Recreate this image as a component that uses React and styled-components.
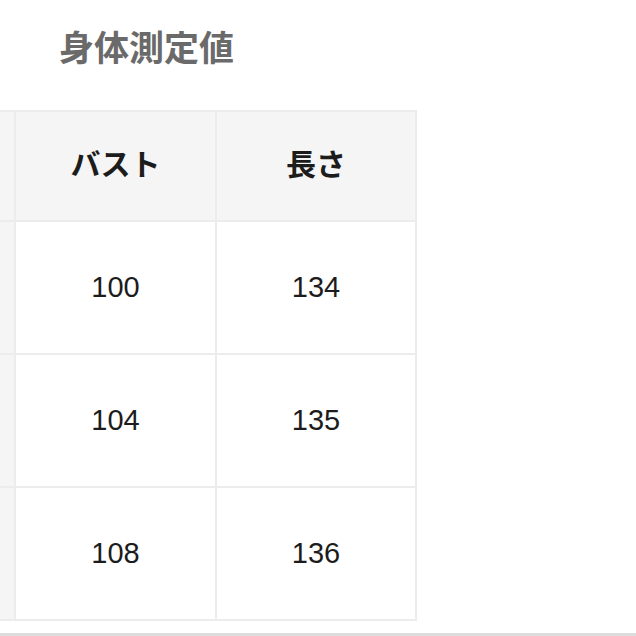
import React from 'react';
import styled, { createGlobalStyle } from 'styled-components';

const GlobalStyle = createGlobalStyle`
  html, body {
    margin: 0;
    padding: 0;
    background: #ffffff;
  }
  body {
    font-family: "Liberation Sans", "Noto Sans CJK JP", sans-serif;
  }
`;

const Page = styled.div`
  width: 636px;
  height: 636px;
  display: flex;
  flex-direction: column;
  overflow: hidden;
  border-bottom: 3px solid #dcdcdc;
  box-sizing: border-box;
`;

const Title = styled.h2`
  margin: 0;
  padding: 24px 0 0 59px;
  height: 84px;
  box-sizing: border-box;
  font-family: "Noto Sans CJK JP", sans-serif;
  font-size: 35px;
  font-weight: 700;
  color: #6a6a6a;
  line-height: 44px;
`;

const Table = styled.table`
  border-collapse: collapse;
  table-layout: fixed;
  margin-top: 26px;
  width: 416px;
`;

const Cell = styled.td`
  border: 2px solid #ececec;
  height: ${({ $h }) => $h}px;
  width: ${({ $w }) => $w}px;
  padding: ${({ $head }) => ($head ? '0 0 8px' : '0')};
  box-sizing: border-box;
  text-align: center;
  vertical-align: middle;
  background: ${({ $head }) => ($head ? '#f5f5f5' : '#ffffff')};
  color: #1c1c1c;
  font-family: ${({ $head }) =>
    $head ? '"Noto Sans CJK JP", sans-serif' : '"Liberation Sans", Arial, sans-serif'};
  font-size: ${({ $head }) => ($head ? 30 : 29)}px;
  font-weight: ${({ $head }) => ($head ? 700 : 400)};
  overflow: hidden;
  &:first-child {
    border-left: none;
    background: #f5f5f5;
  }
`;

const rows = [
  ['100', '134'],
  ['104', '135'],
  ['108', '136'],
];

export default function App() {
  return (
    <Page>
      <GlobalStyle />
      <Title>身体測定値</Title>
      <Table>
        <tbody>
          <tr>
            <Cell $head $h={110} $w={15} />
            <Cell $head $h={110} $w={201}>バスト</Cell>
            <Cell $head $h={110} $w={200}>長さ</Cell>
          </tr>
          {rows.map((r, i) => (
            <tr key={i}>
              <Cell $h={133} $w={15} />
              <Cell $h={133} $w={201}>{r[0]}</Cell>
              <Cell $h={133} $w={200}>{r[1]}</Cell>
            </tr>
          ))}
        </tbody>
      </Table>
    </Page>
  );
}
